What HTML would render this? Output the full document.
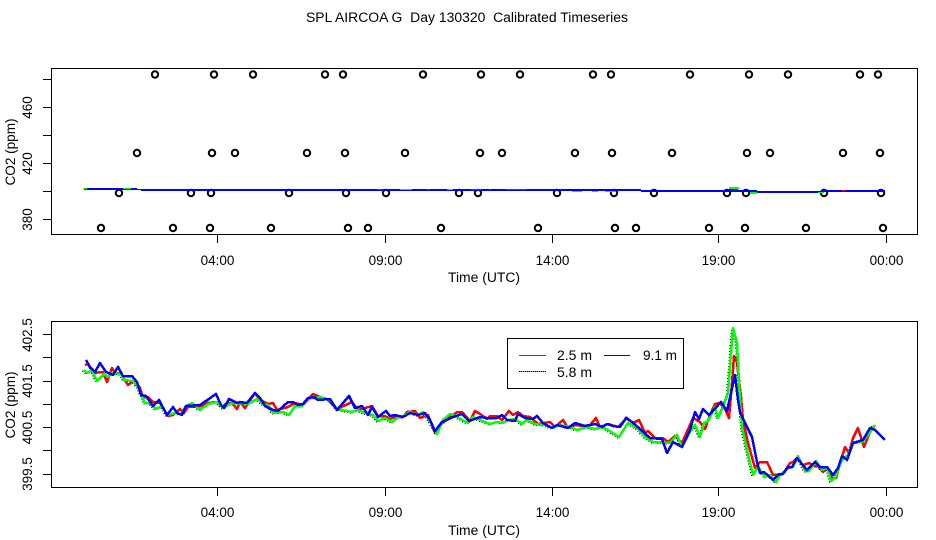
<!DOCTYPE html>
<html><head><meta charset="utf-8"><style>
html,body{margin:0;padding:0;background:#fff;width:936px;height:540px;overflow:hidden}
svg{display:block}
text{font-family:"Liberation Sans",sans-serif;font-size:13.5px;fill:#000}
</style></head><body>
<svg width="936" height="540" viewBox="0 0 936 540" xmlns="http://www.w3.org/2000/svg">
<rect width="936" height="540" fill="#fff"/>
<text x="306" y="22" textLength="322" lengthAdjust="spacingAndGlyphs" xml:space="preserve">SPL AIRCOA G  Day 130320  Calibrated Timeseries</text>

<g fill="none" stroke="#000" stroke-width="1" shape-rendering="crispEdges">
<rect x="51.5" y="68.5" width="866" height="166"/>
<rect x="51.5" y="321.5" width="866" height="166"/>
<path d="M217.5 235V243M385.5 235V243M552.5 235V243M718.5 235V243M886.5 235V243"/>
<path d="M43 79.5H51M43 107.5H51M43 135.5H51M43 163.5H51M43 191.5H51M43 219.5H51"/>
<path d="M217.5 488V496M385.5 488V496M552.5 488V496M718.5 488V496M886.5 488V496"/>
<path d="M43 334.5H51M43 357.5H51M43 381.5H51M43 404.5H51M43 427.5H51M43 450.5H51M43 474.5H51"/>
</g>

<g fill="none" stroke="#000" stroke-width="2">
<circle cx="155" cy="74.5" r="3.2"/><circle cx="214" cy="74.5" r="3.2"/><circle cx="253" cy="74.5" r="3.2"/><circle cx="325" cy="74.5" r="3.2"/><circle cx="343" cy="74.5" r="3.2"/><circle cx="423" cy="74.5" r="3.2"/><circle cx="481" cy="74.5" r="3.2"/><circle cx="520" cy="74.5" r="3.2"/><circle cx="593" cy="74.5" r="3.2"/><circle cx="611" cy="74.5" r="3.2"/><circle cx="690" cy="74.5" r="3.2"/><circle cx="749" cy="74.5" r="3.2"/><circle cx="788" cy="74.5" r="3.2"/><circle cx="860" cy="74.5" r="3.2"/><circle cx="878" cy="74.5" r="3.2"/>
<circle cx="137" cy="153" r="3.2"/><circle cx="212" cy="153" r="3.2"/><circle cx="235" cy="153" r="3.2"/><circle cx="307" cy="153" r="3.2"/><circle cx="345" cy="153" r="3.2"/><circle cx="405" cy="153" r="3.2"/><circle cx="480" cy="153" r="3.2"/><circle cx="502" cy="153" r="3.2"/><circle cx="575" cy="153" r="3.2"/><circle cx="612" cy="153" r="3.2"/><circle cx="672" cy="153" r="3.2"/><circle cx="747" cy="153" r="3.2"/><circle cx="770" cy="153" r="3.2"/><circle cx="843" cy="153" r="3.2"/><circle cx="880" cy="153" r="3.2"/>
<circle cx="119" cy="193" r="3.2"/><circle cx="191" cy="193" r="3.2"/><circle cx="211" cy="193" r="3.2"/><circle cx="289" cy="193" r="3.2"/><circle cx="346" cy="193" r="3.2"/><circle cx="386" cy="193" r="3.2"/><circle cx="459" cy="193" r="3.2"/><circle cx="478" cy="193" r="3.2"/><circle cx="557" cy="193" r="3.2"/><circle cx="614" cy="193" r="3.2"/><circle cx="654" cy="193" r="3.2"/><circle cx="727" cy="193" r="3.2"/><circle cx="746" cy="193" r="3.2"/><circle cx="824" cy="193" r="3.2"/><circle cx="881" cy="193" r="3.2"/>
<circle cx="101" cy="228" r="3.2"/><circle cx="173" cy="228" r="3.2"/><circle cx="210" cy="228" r="3.2"/><circle cx="271" cy="228" r="3.2"/><circle cx="348" cy="228" r="3.2"/><circle cx="368" cy="228" r="3.2"/><circle cx="441" cy="228" r="3.2"/><circle cx="538" cy="228" r="3.2"/><circle cx="615" cy="228" r="3.2"/><circle cx="636" cy="228" r="3.2"/><circle cx="709" cy="228" r="3.2"/><circle cx="745" cy="228" r="3.2"/><circle cx="806" cy="228" r="3.2"/><circle cx="883" cy="228" r="3.2"/>
</g>

<g shape-rendering="crispEdges">
<g fill="#0000ff">
<rect x="84" y="188" width="53" height="2"/><rect x="137" y="189" width="4" height="1"/>
<rect x="141" y="189" width="500" height="2"/>
<rect x="641" y="190" width="116" height="2"/>
<rect x="728" y="189" width="10" height="2"/>
<rect x="757" y="191" width="64" height="2"/>
<rect x="821" y="190" width="64" height="2"/>
</g>
<g fill="#00ff00">
<rect x="83" y="188" width="4" height="1"/><rect x="123" y="188" width="8" height="1"/>
<rect x="400" y="189" width="12" height="1"/><rect x="447" y="189" width="6" height="1"/>
<rect x="572" y="191" width="10" height="1"/><rect x="592" y="191" width="6" height="1"/><rect x="605" y="191" width="10" height="1"/>
<rect x="729" y="187" width="10" height="2"/><rect x="750" y="192" width="7" height="2"/><rect x="818" y="192" width="6" height="1"/>
</g>
<g fill="#ff0000">
<rect x="377" y="189" width="6" height="1"/><rect x="427" y="189" width="3" height="1"/><rect x="471" y="189" width="10" height="1"/>
<rect x="489" y="189" width="2" height="1"/><rect x="506" y="189" width="21" height="1"/><rect x="842" y="190" width="3" height="1"/>
</g>
</g>

<defs>
<polyline id="gl" points="84,370 87,373 92,370 97,381 104,374 108,377 112,373 121,374 124,380 133,381 138,387 145,403 150,403 156,409 162,406 167,415 175,413 182,414 185,407 192,403 200,410 208,404 217,402 223,408 232,403 240,403 248,404 257,399 263,404 268,405 273,413 283,412 289,415 295,406 302,406 308,398 315,398 320,397 330,400 337,409 352,412 357,410 368,414 373,415 378,421 385,418 392,422 397,418 403,416 410,412 418,415 423,412 428,418 437,434 443,420 450,414 457,417 468,423 473,417 480,420 490,424 497,422 503,423 508,420 515,419 522,424 527,420 535,424 545,425 552,428 560,425 570,427 577,430 587,427 595,429 602,427 608,430 619,437 628,423 637,428 645,437 653,442 670,443 677,435 682,447 690,432 695,425 700,437 704,423 708,421 715,407 718,418 723,407 728,393 731,353 733,328 737,343 738,363 740,400 742,427 747,450 753,475 758,467 765,477 770,475 776,482 780,475 788,468 793,467 798,456 805,471 809,471 816,461 822,470 827,468 831,481 835,478 842,460 848,455 853,443 862,442 868,435 875,425"/>
</defs>
<g fill="none" stroke-width="2.5" stroke-linejoin="round" shape-rendering="crispEdges">
<polyline stroke="#ff0000" points="85,365 88,364 93,373 103,372 107,382 112,368 115,373 120,373 128,385 132,382 135,381 140,388 143,397 148,397 153,402 160,403 168,416 173,415 180,409 184,413 188,407 203,406 207,403 217,402 222,407 227,403 232,403 237,409 240,402 245,408 255,393 260,400 268,404 273,403 277,410 288,407 295,403 303,405 313,394 320,397 327,399 337,409 352,402 358,410 372,406 378,416 385,416 390,419 395,417 403,417 407,412 415,411 420,418 428,415 435,433 440,425 457,412 462,412 470,421 475,411 480,414 487,419 490,416 497,416 502,420 509,411 513,415 518,412 523,416 530,417 538,424 550,422 555,427 563,420 568,428 575,425 583,426 590,425 596,418 600,427 608,424 618,427 627,418 633,423 639,420 645,433 648,431 655,438 663,438 668,442 675,436 682,443 693,418 700,422 705,429 710,415 715,404 720,403 725,409 729,418 732,383 734,356 737,362 741,397 743,420 748,443 755,468 760,462 767,462 773,475 783,474 790,463 793,462 797,458 803,465 809,463 814,466 818,466 823,472 827,469 832,478 836,478 845,447 849,453 853,438 858,428 864,447 872,427 875,430"/>
<use href="#gl" stroke="#000" stroke-width="1" stroke-dasharray="1 2" transform="translate(-1.5,1)"/>
<use href="#gl" stroke="#00ff00"/>
<polyline stroke="#0000ff" points="86,360 90,367 95,372 100,363 106,372 113,375 118,367 123,376 132,376 137,382 141,395 146,396 153,406 159,400 167,415 173,407 177,413 182,415 186,406 200,405 216,394 221,405 224,408 229,399 237,403 240,402 247,403 255,393 260,398 265,406 273,410 278,411 288,402 293,402 298,405 303,404 308,398 314,397 318,400 330,399 337,410 349,396 355,408 362,406 368,415 372,407 378,417 386,411 390,416 395,415 403,417 410,413 418,415 425,413 430,420 435,431 442,422 453,417 462,414 469,421 480,417 487,418 497,418 502,415 507,420 515,421 518,414 525,418 533,419 537,416 543,423 552,428 557,425 568,428 575,423 585,426 595,424 602,427 607,424 613,426 620,427 626,418 632,422 640,429 650,438 662,439 667,453 673,442 682,447 690,430 695,412 699,419 703,409 709,415 721,402 727,411 731,393 735,375 738,400 740,412 745,423 752,437 757,462 760,473 764,472 773,480 779,474 783,474 788,467 792,467 797,458 807,470 815,462 820,467 827,467 833,475 838,468 842,456 847,460 853,443 863,440 870,428 875,430 885,440"/>
</g>

<g shape-rendering="crispEdges" fill="none" stroke-width="1">
<rect x="507.5" y="338.5" width="176" height="50" stroke="#000" fill="#fff"/>
<path stroke="#ff0000" d="M519 355.5H546"/>
<path stroke="#0000ff" d="M604 355.5H630"/>
<path stroke="#00ff00" d="M519 371.5H546"/>
<path stroke="#000" stroke-dasharray="1 1" d="M519 371.5H546"/>
</g>
<text x="557" y="360" textLength="35" lengthAdjust="spacingAndGlyphs">2.5 m</text>
<text x="643" y="360" textLength="34" lengthAdjust="spacingAndGlyphs">9.1 m</text>
<text x="557" y="377" textLength="35" lengthAdjust="spacingAndGlyphs">5.8 m</text>

<g text-anchor="middle">
<text x="217.5" y="265">04:00</text><text x="385.5" y="265">09:00</text><text x="552.5" y="265">14:00</text><text x="718.5" y="265">19:00</text><text x="886.5" y="265">00:00</text>
<text x="484" y="282" textLength="72" lengthAdjust="spacingAndGlyphs">Time (UTC)</text>
<text x="217.5" y="517">04:00</text><text x="385.5" y="517">09:00</text><text x="552.5" y="517">14:00</text><text x="718.5" y="517">19:00</text><text x="886.5" y="517">00:00</text>
<text x="484" y="535" textLength="72" lengthAdjust="spacingAndGlyphs">Time (UTC)</text>
<text transform="translate(15,152) rotate(-90)" textLength="67" lengthAdjust="spacingAndGlyphs">CO2 (ppm)</text>
<text transform="translate(15,405) rotate(-90)" textLength="67" lengthAdjust="spacingAndGlyphs">CO2 (ppm)</text>
<text transform="translate(32,107.5) rotate(-90)">460</text>
<text transform="translate(32,163.5) rotate(-90)">420</text>
<text transform="translate(32,219.5) rotate(-90)">380</text>
<text transform="translate(32,335) rotate(-90)">402.5</text>
<text transform="translate(32,381) rotate(-90)">401.5</text>
<text transform="translate(32,427.5) rotate(-90)">400.5</text>
<text transform="translate(32,474) rotate(-90)">399.5</text>
</g>
</svg>
</body></html>
